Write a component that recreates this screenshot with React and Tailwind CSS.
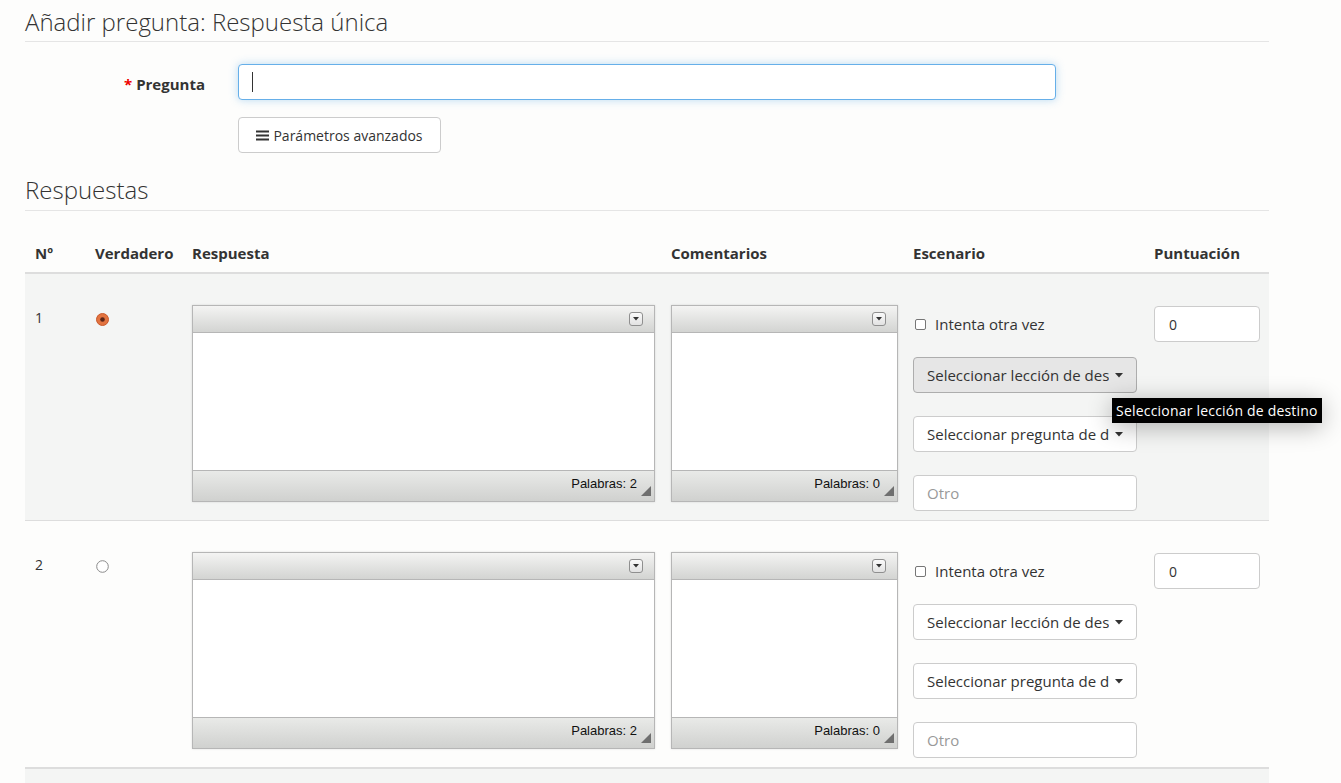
import React from "react";

function Caret() {
  return (
    <svg width="8" height="5" viewBox="0 0 8 5" className="shrink-0">
      <path d="M0 0 L8 0 L4 4.5 Z" fill="#333" />
    </svg>
  );
}

function Editor({ wide, words }) {
  return (
    <div
      className={
        (wide ? "w-[463px]" : "w-[227px]") +
        " h-[197px] border border-[#b6b6b6] shadow-[0_0_2px_rgba(0,0,0,0.12)] bg-white flex flex-col"
      }
    >
      <div className="h-[27px] shrink-0 border-b border-[#b6b6b6] bg-linear-to-b from-[#f4f4f3] to-[#d3d4d2] flex items-center justify-end pr-[11px]">
        <div className="w-[14px] h-[14px] rounded-[3px] border border-[#8f8f8f] bg-linear-to-b from-[#fafafa] to-[#e2e2e2] flex items-center justify-center">
          <svg width="6" height="4" viewBox="0 0 6 4">
            <path d="M0 0 L6 0 L3 3.5 Z" fill="#333" />
          </svg>
        </div>
      </div>
      <div className="flex-1 bg-white" />
      <div className="h-[31px] shrink-0 border-t border-[#b6b6b6] bg-linear-to-b from-[#e9eae8] to-[#d0d1cf] relative flex justify-end pr-[17px] pt-[5px]">
        <span className="font-['Liberation_Sans',Arial,sans-serif] text-[13px] leading-[15px] text-[#111]">
          Palabras: {words}
        </span>
        <svg width="10" height="10" viewBox="0 0 10 10" className="absolute right-[3px] bottom-[5px]">
          <path d="M10 0 L10 10 L0 10 Z" fill="#6f6f6f" />
        </svg>
      </div>
    </div>
  );
}

function Select({ text, active, tooltip }) {
  return (
    <div className="relative">
      <div
        className={
          (active
            ? "bg-[#e6e6e6] border-[#adadad] "
            : "bg-white border-[#cccccc] ") +
          "w-[224px] h-[36px] border rounded-[4px] flex items-center pl-[13px] pr-[13px] gap-[6px]"
        }
      >
        <span className="flex-1 overflow-hidden whitespace-nowrap text-[15px] text-[#333]">
          {text}
        </span>
        <Caret />
      </div>
      {tooltip && (
        <div className="absolute left-[199px] top-[41px] z-10 whitespace-nowrap bg-black text-white text-[14px] leading-[25px] h-[25px] px-[4px] tracking-[0.2px] shadow-[0_4px_24px_rgba(0,0,0,0.3)]">
          {tooltip}
        </div>
      )}
    </div>
  );
}

function Row({ n, checked, gray, thick, tooltip }) {
  return (
    <div
      className={
        (gray ? "bg-[#f4f5f4] " : "bg-[#fdfdfc] ") +
        (thick ? "border-b-2 " : "border-b ") +
        "border-[#dddddd] grid grid-cols-[60px_97px_479px_242px_241px_125px] pt-[31px] pb-[9px]"
      }
    >
      <div className="pl-[10px] pt-[3px] text-[14px] leading-[20px] text-[#333]">{n}</div>
      <div className="pl-[11px] pt-[8px]">
        {checked ? (
          <svg width="13" height="13" viewBox="0 0 13 13">
            <circle cx="6.5" cy="6.5" r="6" fill="#e2733f" stroke="#c9582a" strokeWidth="1" />
            <circle cx="6.5" cy="6.5" r="2.3" fill="#5a2416" />
          </svg>
        ) : (
          <svg width="13" height="13" viewBox="0 0 13 13">
            <circle cx="6.5" cy="6.5" r="5.8" fill="#fff" stroke="#8a8a8a" strokeWidth="1" />
          </svg>
        )}
      </div>
      <div className="pl-[10px]">
        <Editor wide words={2} />
      </div>
      <div className="pl-[10px]">
        <Editor words={0} />
      </div>
      <div className="pl-[10px] flex flex-col">
        <div className="mt-[9px] h-[20px] flex items-center gap-[9px] pl-[2px]">
          <span className="w-[11px] h-[11px] border border-[#767676] rounded-[2px] bg-white" />
          <span className="text-[15px] text-[#333]">Intenta otra vez</span>
        </div>
        <div className="mt-[23px]">
          <Select text="Seleccionar lección de destino" active={!!tooltip} tooltip={tooltip} />
        </div>
        <div className="mt-[23px]">
          <Select text="Seleccionar pregunta de destino" />
        </div>
        <div className="mt-[23px] w-[224px] h-[36px] border border-[#cccccc] rounded-[4px] bg-white flex items-center pl-[13px] text-[15px] text-[#999]">
          Otro
        </div>
      </div>
      <div className="pl-[10px]">
        <div className="mt-[1px] w-[106px] h-[36px] border border-[#cccccc] rounded-[4px] bg-white flex items-center pl-[14px] text-[14px] text-[#333]">
          0
        </div>
      </div>
    </div>
  );
}

export default function App() {
  return (
    <div className="min-h-[783px] bg-[#fdfdfc] font-['Open_Sans',sans-serif] text-[#333] overflow-hidden">
      <div className="ml-[25px] w-[1244px]">
        <h1 className="mt-[7px] text-[24px] leading-[30px] font-light text-[#333] pb-[4px] border-b border-[#e5e5e5]">
          Añadir pregunta: Respuesta única
        </h1>

        <div className="mt-[22px] flex items-center">
          <label className="w-[180px] text-right text-[15px] font-bold text-[#333] pt-[4px]">
            <span className="text-[#e00] mr-[4px]">*</span>Pregunta
          </label>
          <div className="ml-[33px] w-[818px] h-[36px] rounded-[4px] border border-[#66afe9] bg-white shadow-[0_0_8px_rgba(102,175,233,0.45)] flex items-center pl-[13px]">
            <span className="w-px h-[20px] bg-[#333]" />
          </div>
        </div>

        <div className="mt-[17px] ml-[213px]">
          <button className="w-[203px] h-[36px] border border-[#cccccc] rounded-[4px] bg-white flex items-center justify-center gap-[4px] text-[14px] text-[#333]">
            <svg width="13" height="11" viewBox="0 0 13 11">
              <rect x="0" y="0.5" width="13" height="2" fill="#333" />
              <rect x="0" y="4.5" width="13" height="2" fill="#333" />
              <rect x="0" y="8.5" width="13" height="2" fill="#333" />
            </svg>
            Parámetros avanzados
          </button>
        </div>

        <h2 className="mt-[22px] text-[24px] leading-[30px] font-light text-[#333] pb-[5px] border-b border-[#e5e5e5]">
          Respuestas
        </h2>

        <div className="mt-[21px]">
          <div className="grid grid-cols-[60px_97px_479px_242px_241px_125px] pt-[11px] pb-[9px] border-b-2 border-[#dddddd] text-[15px] leading-[20px] font-bold text-[#333]">
            <div className="pl-[10px]">Nº</div>
            <div className="pl-[10px]">Verdadero</div>
            <div className="pl-[10px]">Respuesta</div>
            <div className="pl-[10px]">Comentarios</div>
            <div className="pl-[10px]">Escenario</div>
            <div className="pl-[10px]">Puntuación</div>
          </div>
          <Row n="1" checked gray tooltip="Seleccionar lección de destino" />
          <Row n="2" thick />
          <div className="h-[40px] bg-[#f4f5f4]" />
        </div>
      </div>
    </div>
  );
}
